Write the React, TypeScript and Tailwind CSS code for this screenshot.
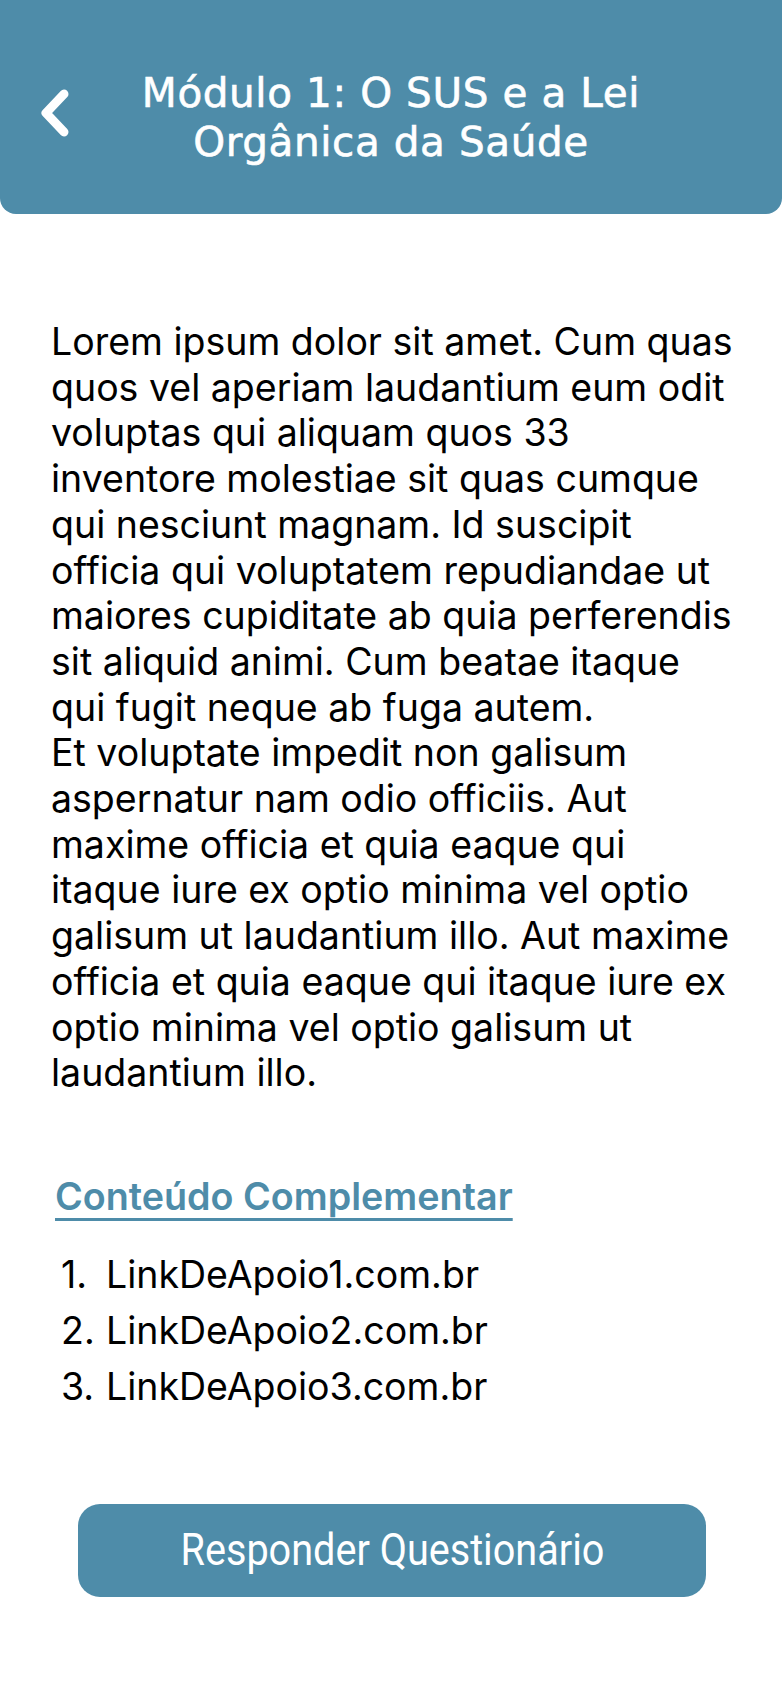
import React from "react";

const bodyLines = [
  "Lorem ipsum dolor sit amet. Cum quas",
  "quos vel aperiam laudantium eum odit",
  "voluptas qui aliquam quos 33",
  "inventore molestiae sit quas cumque",
  "qui nesciunt magnam. Id suscipit",
  "officia qui voluptatem repudiandae ut",
  "maiores cupiditate ab quia perferendis",
  "sit aliquid animi. Cum beatae itaque",
  "qui fugit neque ab fuga autem.",
  "Et voluptate impedit non galisum",
  "aspernatur nam odio officiis. Aut",
  "maxime officia et quia eaque qui",
  "itaque iure ex optio minima vel optio",
  "galisum ut laudantium illo. Aut maxime",
  "officia et quia eaque qui itaque iure ex",
  "optio minima vel optio galisum ut",
  "laudantium illo.",
];

const links = ["LinkDeApoio1.com.br", "LinkDeApoio2.com.br", "LinkDeApoio3.com.br"];

export default function App() {
  return (
    <div className="min-h-[1692px] w-[782px] bg-white" style={{ fontFamily: "Inter, 'Noto Sans', sans-serif" }}>
      <header className="relative flex h-[214px] items-center justify-center rounded-b-[16px] bg-[#4e8ca9] pt-[22px]">
        <button className="absolute left-[38px] top-[89px] flex h-[48px] w-[34px] items-center justify-center">
          <svg width="34" height="48" viewBox="0 0 34 48" fill="none">
            <path d="M26 5 L8 24 L26 43" stroke="white" strokeWidth="9" strokeLinecap="round" strokeLinejoin="round" />
          </svg>
        </button>
        <h1
          className="text-center text-[40.5px] leading-[49px] text-white tracking-[0.6px] [-webkit-text-stroke:0.6px_white]"
          style={{ fontFamily: "'DejaVu Sans', 'Open Sans', sans-serif" }}
        >
          Módulo 1: O SUS e a Lei
          <br />
          Orgânica da Saúde
        </h1>
      </header>

      <main className="px-[51px] pt-[105px]">
        <p className="whitespace-nowrap text-[37.5px] leading-[45.7px] text-black">
          {bodyLines.map((l, i) => (
            <React.Fragment key={i}>
              {l}
              {i < bodyLines.length - 1 && <br />}
            </React.Fragment>
          ))}
        </p>

        <h2 className="mt-[78px] pl-[4px] text-[37.7px] leading-[44px] font-semibold text-[#4e8ca9] underline decoration-[2.5px] underline-offset-[8px]">
          Conteúdo Complementar
        </h2>

        <ol className="mt-[29px] pl-[10px] text-[37.5px] leading-[56px] text-black">
          {links.map((l, i) => (
            <li key={l} className="flex">
              <span className="w-[45px]">{i + 1}.</span>
              <span>{l}</span>
            </li>
          ))}
        </ol>

        <div className="mt-[89px] flex justify-center">
          <button className="ml-[2px] flex h-[93px] w-[628px] items-center justify-center rounded-[22px] bg-[#4e8ca9] text-white">
            <span
              className="inline-block origin-center scale-x-[0.9] text-[44px]"
              style={{ fontFamily: "Roboto, sans-serif" }}
            >
              Responder Questionário
            </span>
          </button>
        </div>
      </main>
    </div>
  );
}
